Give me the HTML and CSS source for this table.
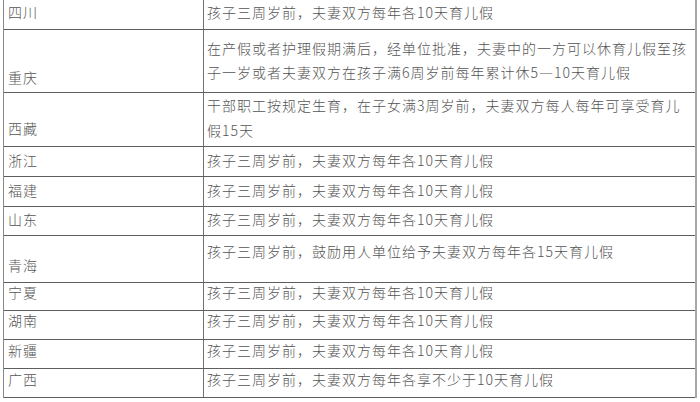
FILE: index.html
```html
<!DOCTYPE html>
<html lang="zh-CN">
<head>
<meta charset="utf-8">
<title>育儿假</title>
<link rel="stylesheet" href="styles.css">
</head>
<body>
<div class="table">
  <div class="row r1"><div class="k p2">四川</div><div class="v p2">孩子三周岁前，夫妻双方每年各10天育儿假</div></div>
  <div class="row r2"><div class="k p37">重庆</div><div class="v p6 lh24">在产假或者护理假期满后，经单位批准，夫妻中的一方可以休育儿假至孩<br>子一岁或者夫妻双方在孩子满6周岁前每年累计休5—10天育儿假</div></div>
  <div class="row r3"><div class="k p25">西藏</div><div class="v p0 lh25">干部职工按规定生育，在子女满3周岁前，夫妻双方每人每年可享受育儿<br>假15天</div></div>
  <div class="row r4"><div class="k p3">浙江</div><div class="v p3">孩子三周岁前，夫妻双方每年各10天育儿假</div></div>
  <div class="row r5"><div class="k p3">福建</div><div class="v p3">孩子三周岁前，夫妻双方每年各10天育儿假</div></div>
  <div class="row r6"><div class="k p2">山东</div><div class="v p2">孩子三周岁前，夫妻双方每年各10天育儿假</div></div>
  <div class="row r7"><div class="k p19">青海</div><div class="v p5">孩子三周岁前，鼓励用人单位给予夫妻双方每年各15天育儿假</div></div>
  <div class="row r8"><div class="k lh18">宁夏</div><div class="v lh18">孩子三周岁前，夫妻双方每年各10天育儿假</div></div>
  <div class="row r9"><div class="k lh18">湖南</div><div class="v lh18">孩子三周岁前，夫妻双方每年各10天育儿假</div></div>
  <div class="row r10"><div class="k p1 lh18">新疆</div><div class="v p1 lh18">孩子三周岁前，夫妻双方每年各10天育儿假</div></div>
  <div class="row r11"><div class="k p1 lh18">广西</div><div class="v p1 lh18">孩子三周岁前，夫妻双方每年各享不少于10天育儿假</div></div>
</div>
</body>
</html>
```
FILE: styles.css
```css
html, body {
  margin: 0;
  padding: 0;
  background: #ffffff;
}

.table {
  margin-left: 3px;
  width: 694px;
  box-sizing: border-box;
  border-left: 1px solid #8a8a8a;
  border-right: 2px solid #a8a8a8;
  font-family: "Noto Sans CJK SC", "Noto Sans", sans-serif;
  font-size: 14px;
  font-weight: 300;
  letter-spacing: 1px;
  color: #555555;
}

.row {
  display: grid;
  grid-template-columns: 200px 1fr;
  box-sizing: border-box;
  border-bottom: 1px solid #5e5e5e;
  line-height: 20px;
}

.k {
  box-sizing: border-box;
  border-right: 1px solid #707070;
  padding-left: 4px;
  white-space: nowrap;
}

.v {
  padding-left: 3px;
  white-space: nowrap;
}

.r1 { height: 30px; }
.r2 { height: 63px; }
.r3 { height: 54px; }
.r4 { height: 30px; }
.r5 { height: 30px; }
.r6 { height: 29px; }
.r7 { height: 47px; }
.r8 { height: 28px; }
.r9 { height: 29px; }
.r10 { height: 29px; }
.r11 { height: 29px; }

.p0 { padding-top: 0; }
.p1 { padding-top: 1px; }
.p2 { padding-top: 2px; }
.p3 { padding-top: 3px; }
.p5 { padding-top: 5px; }
.p6 { padding-top: 6px; }
.p19 { padding-top: 19px; }
.p25 { padding-top: 25px; }
.p37 { padding-top: 37px; }

.lh18 { line-height: 18px; }
.lh24 { line-height: 24px; }
.lh25 { line-height: 25px; }
```
